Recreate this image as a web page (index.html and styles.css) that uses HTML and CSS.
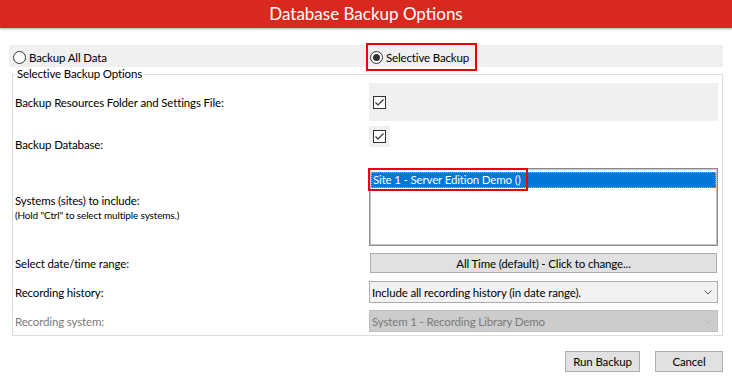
FILE: index.html
```html
<!DOCTYPE html>
<html>
<head>
    <title>Database Backup Options</title>
    <link rel="stylesheet" href="styles.css">
</head>
<body>
    <div class="title-bar">Database Backup Options</div>

    <div class="mode-row">
        <label class="radio-option">
            <svg class="radio-icon" viewBox="0 0 13 13"><circle cx="6.5" cy="6.5" r="6" fill="#fff" stroke="#333"/></svg>
            Backup All Data
        </label>
        <label class="radio-option marked">
            <svg class="radio-icon" viewBox="0 0 13 13"><circle cx="6.5" cy="6.5" r="6" fill="#fff" stroke="#333"/><circle cx="6.5" cy="6.5" r="3.5" fill="#333"/></svg>
            Selective Backup
        </label>
    </div>

    <fieldset class="options">
        <legend>Selective Backup Options</legend>
        <div class="options-grid">
            <div class="field-label row-resources">Backup Resources Folder and Settings File:</div>
            <div class="check-band row-resources">
                <svg class="check-icon" viewBox="0 0 13 13"><rect x="0.5" y="0.5" width="12" height="12" fill="#fff" stroke="#333"/><path d="M2.5 6.5 L5 9 L10.5 3.5" fill="none" stroke="#333" stroke-width="1.2"/></svg>
            </div>

            <div class="field-label row-database">Backup Database:</div>
            <div class="row-database">
                <div class="check-small">
                    <svg class="check-icon" viewBox="0 0 13 13"><rect x="0.5" y="0.5" width="12" height="12" fill="#fff" stroke="#333"/><path d="M2.5 6.5 L5 9 L10.5 3.5" fill="none" stroke="#333" stroke-width="1.2"/></svg>
                </div>
            </div>

            <div class="field-label row-systems">
                <div>Systems (sites) to include:</div>
                <div class="hint">(Hold "Ctrl" to select multiple systems.)</div>
            </div>
            <div class="listbox row-systems">
                <div class="list-item selected"><span class="marked-text">Site 1 - Server Edition Demo ()</span></div>
            </div>

            <div class="field-label row-date">Select date/time range:</div>
            <button class="win-button wide row-date">All Time (default) - Click to change...</button>

            <div class="field-label row-history">Recording history:</div>
            <div class="combo row-history">
                <span>Include all recording history (in date range).</span>
                <svg class="chevron" viewBox="0 0 8 5"><path d="M0.5 0.5 L4 4 L7.5 0.5" fill="none" stroke="#555"/></svg>
            </div>

            <div class="field-label disabled row-system">Recording system:</div>
            <div class="combo disabled row-system">
                <span>System 1 - Recording Library Demo</span>
                <svg class="chevron" viewBox="0 0 8 5"><path d="M0.5 0.5 L4 4 L7.5 0.5" fill="none" stroke="#bbb"/></svg>
            </div>
        </div>
    </fieldset>

    <div class="actions">
        <button class="win-button run">Run Backup</button>
        <button class="win-button cancel">Cancel</button>
    </div>
</body>
</html>
```

FILE: styles.css
```css
body {
    margin: 0;
    font-family: Lato, "Noto Sans", sans-serif;
    font-size: 11.5px;
    letter-spacing: -0.15px;
    color: #000;
    background-color: #fff;
}
.title-bar {
    height: 28px;
    line-height: 28px;
    background-color: #d9291f;
    color: #fff;
    text-align: center;
    font-size: 17px;
    letter-spacing: 0;
    box-shadow: 0 1px 2px rgba(0, 0, 0, 0.35);
}
.mode-row {
    margin: 17px 9px 0 9px;
    height: 22px;
    background-color: #f0f0f0;
    display: grid;
    grid-template-columns: 359px 1fr;
    align-items: center;
}
.radio-option {
    display: inline-flex;
    align-items: center;
    gap: 3px;
    padding-left: 4px;
    height: 24px;
    justify-self: start;
}
.radio-option.marked {
    padding: 0 6px 0 2px;
    outline: 2px solid #ee0000;
}
.radio-icon {
    width: 13px;
    height: 13px;
}
.options {
    margin: 0 9px 0 12px;
    padding: 2px 4px 3px 2px;
    border: 1px solid #dcdcdc;
}
.options legend {
    padding: 0 2px;
    line-height: 14px;
}
.options-grid {
    display: grid;
    grid-template-columns: 354px 349px;
    align-items: center;
}
.field-label {
    line-height: 15px;
}
.field-label.disabled {
    color: #7a7a7a;
}
.hint {
    font-size: 10px;
    line-height: 14px;
}
.check-band {
    height: 38px;
    background-color: #f0f0f0;
    display: flex;
    align-items: center;
    padding-left: 4px;
}
.check-icon {
    width: 13px;
    height: 13px;
    display: block;
}
.row-database {
    margin-top: 5px;
    height: 36px;
    align-self: start;
}
.field-label.row-database {
    display: flex;
    align-items: center;
}
.check-small {
    width: 21px;
    height: 21px;
    background-color: #f0f0f0;
    display: flex;
    align-items: center;
    justify-content: center;
}
.row-systems {
    margin-top: 6px;
}
.listbox {
    height: 78px;
    box-sizing: border-box;
    border: 1px solid #8c8c8c;
    box-shadow: inset 0 0 0 1px #c4c4c4;
    background-color: #fff;
    padding: 3px 1px 0 1px;
}
.list-item {
    height: 16px;
    line-height: 14px;
    box-sizing: border-box;
    padding-left: 1px;
}
.list-item.selected {
    background-color: #0078d7;
    color: #fff;
    border: 1px dotted #f0a040;
}
.marked-text {
    outline: 2px solid #ee0000;
    outline-offset: 3px;
    padding-right: 2px;
}
.row-date {
    margin-top: 7px;
}
.win-button {
    font-family: inherit;
    font-size: 11.5px;
    letter-spacing: -0.15px;
    color: #000;
    background-color: #e1e1e1;
    border: 1px solid #adadad;
    height: 21px;
    padding: 0;
}
.win-button.wide {
    width: 347px;
    margin-left: 1px;
    height: 20px;
}
.row-history {
    margin-top: 8px;
}
.combo {
    height: 22px;
    box-sizing: border-box;
    border: 1px solid #acacac;
    background-color: #f2f2f2;
    display: flex;
    align-items: center;
    justify-content: space-between;
    padding: 0 5px 0 2px;
}
.combo.disabled {
    background-color: #cccccc;
    border-color: #bfbfbf;
    color: #7a7a7a;
}
.row-system {
    margin-top: 7px;
}
.chevron {
    width: 8px;
    height: 5px;
}
.actions {
    margin: 15px 9px 0 0;
    display: flex;
    justify-content: flex-end;
    gap: 15px;
}
.run {
    width: 75px;
}
.cancel {
    width: 68px;
}
```
